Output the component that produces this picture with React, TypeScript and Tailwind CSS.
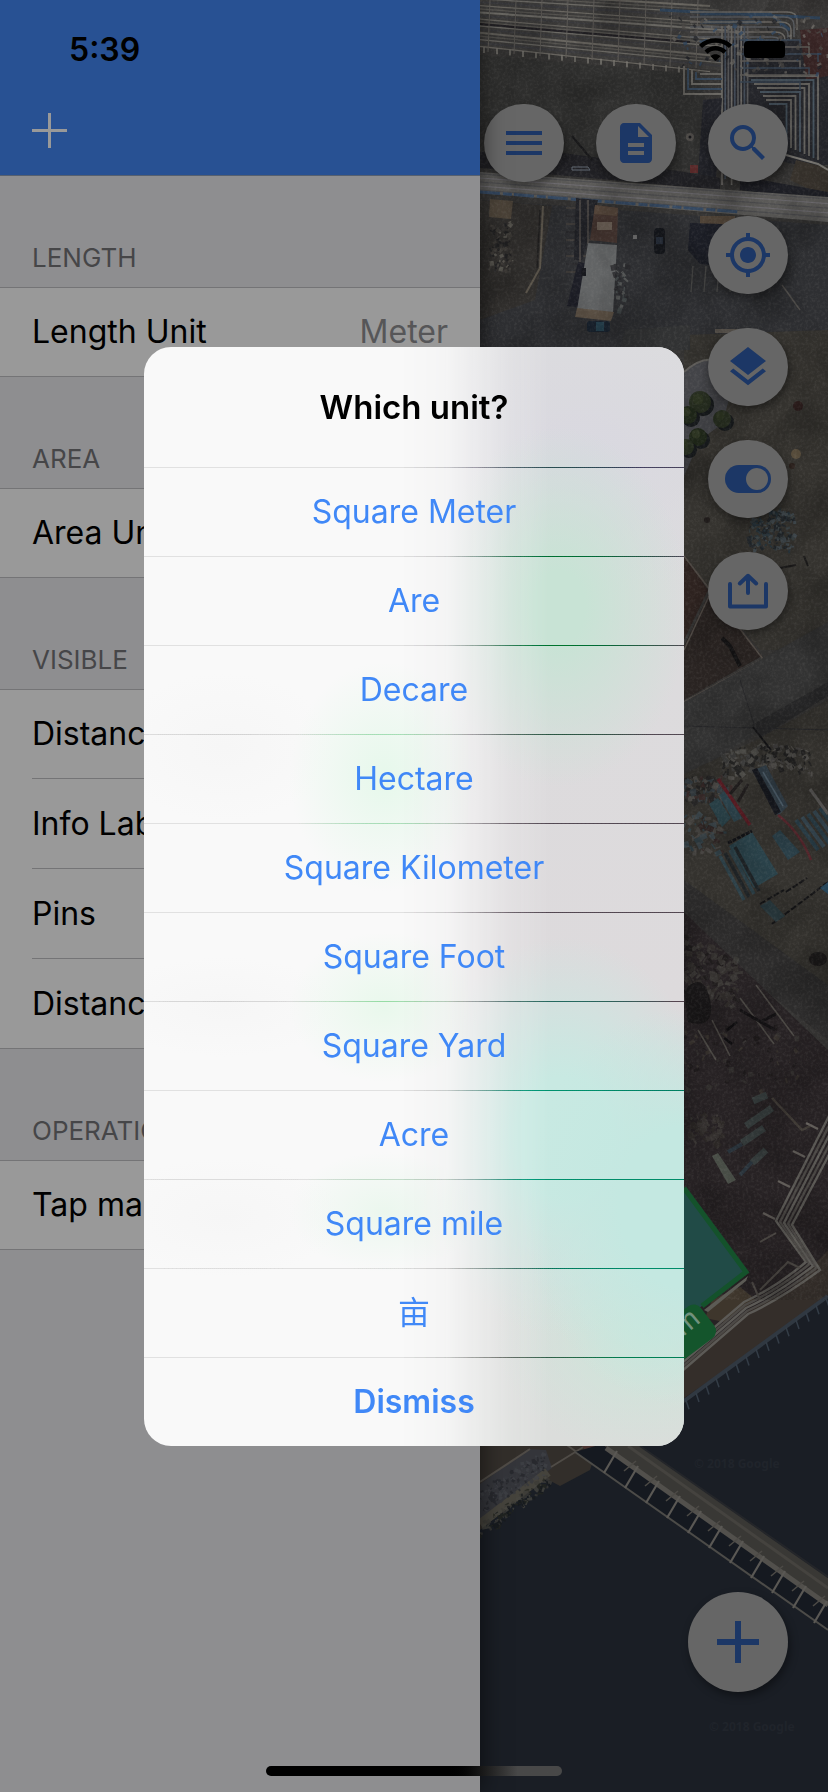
import React from "react";
import {
  MdDescription,
  MdLayers,
  MdMenu,
  MdMyLocation,
  MdSearch,
} from "react-icons/md";

const UNITS = [
  "Square Meter",
  "Are",
  "Decare",
  "Hectare",
  "Square Kilometer",
  "Square Foot",
  "Square Yard",
  "Acre",
  "Square mile",
  "亩",
];

function seeded(seed: number) {
  let s = seed;
  return () => {
    s = (s * 16807) % 2147483647;
    return s / 2147483647;
  };
}

type Box = [number, number, number, number];

function Debris({
  seed,
  count,
  box,
  colors,
  size,
  tilt = 0,
}: {
  seed: number;
  count: number;
  box: Box;
  colors: string[];
  size: number;
  tilt?: number;
}) {
  const r = seeded(seed);
  const [x0, y0, x1, y1] = box;
  return (
    <g opacity="0.75">
      {Array.from({ length: count }, (_, i) => {
        const x = x0 + r() * (x1 - x0);
        const y = y0 + r() * (y1 - y0) + (x - x0) * tilt;
        const w = 1 + r() * size;
        const h = 1 + r() * size;
        const fill = colors[Math.floor(r() * colors.length)];
        const angle = Math.floor(r() * 90);
        return (
          <rect key={i} x={x} y={y} width={w} height={h} fill={fill} transform={`rotate(${angle} ${x} ${y})`} />
        );
      })}
    </g>
  );
}

function range(n: number) {
  return Array.from({ length: n }, (_, i) => i);
}

function SatelliteMap() {
  return (
    <svg
      className="absolute inset-0 h-full w-full"
      viewBox="480 0 348 1792"
      preserveAspectRatio="xMinYMin slice"
      aria-hidden="true"
    >
      <defs>
        <filter id="grain" x="0" y="0" width="100%" height="100%">
          <feTurbulence type="fractalNoise" baseFrequency="0.35" numOctaves="3" seed="4" />
          <feColorMatrix values="0 0 0 0 0.5  0 0 0 0 0.48  0 0 0 0 0.45  0.9 0 0 0 -0.38" />
        </filter>
        <filter id="patches" x="0" y="0" width="100%" height="100%">
          <feTurbulence type="fractalNoise" baseFrequency="0.02" numOctaves="4" seed="9" />
          <feColorMatrix values="0 0 0 0 0  0 0 0 0 0  0 0 0 0 0  1.6 0 0 0 -0.6" />
        </filter>
      </defs>

      <rect x="480" y="0" width="348" height="1792" fill="#343332" />
      <path d="M480 55 L700 75 L720 170 L480 165 Z" fill="#30302f" />
      <path d="M480 200 L828 225 L828 330 L690 350 L480 350 Z" fill="#2e2f32" />
      <path d="M480 200 L552 206 L535 300 L480 320 Z" fill="#312f2d" />
      <path d="M684 335 L828 330 L828 650 L760 650 L684 560 Z" fill="#35332f" />
      <path d="M788 0 H828 V60 L800 45 Z" fill="#393736" />

      {/* upper pipe rack */}
      <path d="M480 0 H770 L735 72 L480 48 Z" fill="#3c3b3a" />
      {range(17).map((i) => (
        <path
          key={i}
          d={`M480 ${-8 + i * 3.4} L${710 + (i % 4) * 9} ${6 + i * 4.1}`}
          stroke={["#68655f", "#55534f", "#6b6964", "#3a3a3d"][i % 4]}
          strokeWidth={i % 3 === 0 ? 2 : 1.3}
          fill="none"
        />
      ))}
      <path d="M480 24 L690 42" stroke="#222024" strokeWidth="2" />
      {range(9).map((i) => (
        <path key={i} d={`M${490 + i * 26} 0 l-2 ${52 + i * 2}`} stroke="#5d5a56" strokeWidth="1" />
      ))}
      {range(16).map((i) => (
        <path key={i} d={`M${484 + i * 13} ${47 + i * 1.3} v6`} stroke="#77746e" strokeWidth="1.4" />
      ))}
      <path d="M660 10 L820 18 M700 14 h70 l20 16 M700 22 h60" stroke="#2d4055" strokeWidth="3" fill="none" />
      {range(6).map((i) => (
        <path
          key={i}
          d={`M690 ${12 + i * 5} H${772 + (5 - i) * 3} q10 0 10 8 v${10 + i * 2}`}
          stroke={i % 2 ? "#54575b" : "#65635f"}
          strokeWidth="1.6"
          fill="none"
        />
      ))}

      {/* right pipe cluster */}
      <path d="M722 40 H828 V165 H800 L722 150 Z" fill="#26272c" />
      <path d="M800 30 L828 28 V76 L806 80 Z" fill="#3a2626" />
      {range(8).map((i) => (
        <path
          key={i}
          d={`M${748 + i * 3} ${76 + i * 4} H${818 - i * 4.5} V${160 - i * 2}`}
          stroke={i % 3 === 1 ? "#47545f" : "#676561"}
          strokeWidth="1.8"
          fill="none"
        />
      ))}
      {range(9).map((i) => (
        <path
          key={i}
          d={`M${722 + i * 3.2} 26 V${185 - (i % 3) * 6}`}
          stroke={["#696763", "#434c58", "#575758"][i % 3]}
          strokeWidth="1.7"
        />
      ))}
      {range(5).map((i) => (
        <path
          key={i}
          d={`M${684 + i * 4} ${66 + i * 2} V${94 - i * 5} H${722}`}
          stroke={i % 2 ? "#36475a" : "#696762"}
          strokeWidth="1.8"
          fill="none"
        />
      ))}
      {range(7).map((i) => (
        <path key={i} d={`M740 ${40 + i * 7} H${800 + (i % 3) * 9} v8`} stroke={i % 2 ? "#605e5a" : "#3a4755"} strokeWidth="1.5" fill="none" />
      ))}
      <Debris seed={11} count={130} box={[672, 14, 828, 72]} colors={["#6d6a65", "#1f2126", "#304863", "#4d4a47"]} size={4} />
      <path d="M703 100 L722 98 L716 178 L698 176 Z" fill="#222329" />
      <path d="M796 160 L828 168 V198 L790 180 Z" fill="#38332d" />
      <path d="M786 155 L818 164 L828 170" stroke="#7b7974" strokeWidth="2" fill="none" />
      <path d="M690 165 h8 v8 h-8 Z" fill="#5a2a2a" />

      {/* main pipeway */}
      <path d="M540 150 L600 158 L720 178 V190 L480 168 V152 Z" fill="#222226" />
      <path d="M740 176 L828 192 V202 L740 190 Z" fill="#1e1f25" />
      <path d="M480 172 L828 197 V222 L480 193 Z" fill="#5a5957" />
      {range(5).map((i) => (
        <path key={i} d={`M480 ${174 + i * 4} L828 ${199 + i * 4.6}`} stroke={i % 2 ? "#6b696d" : "#4b4b4d"} strokeWidth="1.2" />
      ))}
      <path d="M480 192 L740 212" stroke="#344861" strokeWidth="3" strokeDasharray="20 3 9 2" />
      <path d="M572 136 L592 160" stroke="#1b1b1d" strokeWidth="2" />
      <path d="M572 170 h18 l-2 -3 h-16 Z" stroke="#626a74" fill="none" />
      <circle cx="690" cy="137" r="4" fill="#4d4a47" />
      <circle cx="690" cy="137" r="1.5" fill="#17171a" />

      {/* yard below the pipeway */}
      <path d="M490 199 L513 201 L511 219 L489 217 Z" fill="#4f463b" />
      <Debris seed={5} count={60} box={[490, 220, 512, 272]} colors={["#625f58", "#1e1e20", "#45423e"]} size={4} />
      <path d="M543 206 L540 268 L526 293" stroke="#5c564c" strokeWidth="2" fill="none" />
      <path d="M540 210 L537 268" stroke="#201f1f" strokeWidth="1.5" />
      {range(9).map((i) => (
        <path key={i} d={`M566 ${208 + i * 8} H600`} stroke={i % 2 ? "#28282b" : "#44403c"} strokeWidth="1.4" />
      ))}
      <path d="M576 198 L598 200 L590 232 L582 260 L574 260 Z" fill="#212227" />
      <path d="M580 200 V262 M588 200 V244" stroke="#4d4a47" strokeWidth="1.5" />
      <path d="M595 205 L618 208 L617 243 L590 240 Z" fill="#463631" />
      <path d="M595 205 L618 208 L617 216 L594 214 Z" fill="#54453a" />
      <path d="M597 222 h15 v8 h-15 Z" fill="#6c6056" />
      <path d="M578 262 L589 264 L582 308 L567 306 Z" fill="#1d1e26" />
      <path d="M588 243 L617 245 L613 313 L577 310 Z" fill="#626465" />
      <path d="M577 308 L614 312 L611 321 L575 317 Z" fill="#5c5145" />
      <path d="M582 268 h4 v8 h-5 Z" fill="#17181d" />
      <Debris seed={8} count={34} box={[615, 262, 626, 308]} colors={["#5d5f5e", "#474e4f", "#262629"]} size={5} />
      <rect x="587" y="321" width="23" height="11" rx="3" fill="#1a2430" />
      <rect x="596" y="322" width="8" height="9" fill="#264250" />
      <rect x="654" y="228" width="11" height="26" rx="4" fill="#15171c" />
      <rect x="656" y="237" width="7" height="7" fill="#252c38" />
      <rect x="633" y="235" width="4" height="4" fill="#6c6c6c" />
      <path d="M700 216 h35 v8 h-35 Z" fill="#4f4337" />
      <path d="M690 223 L722 224 V266 L700 264 L688 250 Z" fill="#1c1e26" />
      {range(5).map((i) => (
        <path key={i} d={`M${693 + i * 13} 266 l-2 26`} stroke="#4a4a49" strokeWidth="1.3" />
      ))}
      <path d="M782 285 L800 310" stroke="#504e4b" strokeWidth="1.5" />
      <path d="M715 329 h34 v4 h-34 Z" fill="#55504a" />
      <path d="M625 330 L690 325 L690 350 H620 Z" fill="#313233" />

      {/* tree bed */}
      <path d="M684 372 Q700 358 712 360 L730 396 L722 424 L700 440 L684 476 Z" fill="#434448" />
      <path d="M684 372 Q700 358 712 360" stroke="#5e5c59" strokeWidth="2" fill="none" />
      {[
        [700, 402, 11],
        [688, 415, 9],
        [722, 419, 9],
        [698, 437, 9],
        [686, 447, 8],
      ].map(([x, y, r], i) => (
        <g key={i}>
          <circle cx={x + 3} cy={y + 3} r={r} fill="#171a1c" />
          <circle cx={x} cy={y} r={r} fill={i % 2 ? "#1f2719" : "#272e20"} />
          <circle cx={x - 2} cy={y - 3} r={r / 2} fill="#2d3522" />
        </g>
      ))}
      <circle cx="798" cy="406" r="5" fill="#2c1d1c" />
      <circle cx="796" cy="454" r="5" fill="#574c3b" />
      <circle cx="792" cy="466" r="3" fill="#2b211d" />
      <circle cx="707" cy="520" r="3" fill="#1f1b1a" />
      <Debris seed={21} count={170} box={[750, 508, 794, 550]} colors={["#1b2229", "#3c474c", "#46525a", "#22343f"]} size={4} />
      <path d="M780 568 L796 565 M804 556 l4 10" stroke="#1a1919" strokeWidth="2" />

      {/* fenced lots */}
      <path d="M684 556 L708 590 L684 640 Z" fill="#2e2320" />
      <path d="M710 592 L762 656 L684 700 V646 Z" fill="#2a2422" />
      <path d="M684 556 L763 659 L684 702 M709 596 L684 650" stroke="#504a45" strokeWidth="1.6" fill="none" />
      <path d="M722 638 l8 8 l10 20" stroke="#141314" strokeWidth="4" fill="none" />
      <path d="M684 702 L828 622 V690 L684 778 Z" fill="#333333" />
      <path d="M752 725 L828 682 V696 L760 738 Z" fill="#29292a" />
      <path d="M684 774 L760 738 L828 700 V1000 L780 950 L684 900 Z" fill="#34322e" />
      <path d="M684 726 L828 730 M740 680 L754 724" stroke="#28282a" strokeWidth="1" />

      {/* material yard */}
      <Debris seed={31} count={80} box={[722, 750, 770, 775]} colors={["#53524f", "#3e3e3e", "#1e1e1f"]} size={6} tilt={-0.2} />
      <Debris seed={32} count={80} box={[768, 740, 812, 765]} colors={["#555350", "#1b1b1c", "#454342"]} size={5} tilt={0.2} />
      <Debris seed={33} count={110} box={[684, 775, 730, 800]} colors={["#555350", "#37434b", "#242425", "#3e2c2c"]} size={6} />
      <Debris seed={36} count={70} box={[684, 810, 722, 850]} colors={["#2f434c", "#3c4a52", "#2f2323", "#4c4a48"]} size={7} />
      <path d="M709 804 L718 798 L731 818 L722 827 Z" fill="#294148" />
      <path d="M719 795 L725 791 L742 818 L734 822 Z" fill="#2c434c" />
      <path d="M754 770 L766 765 L788 806 L778 816 Z" fill="#303c45" />
      <path d="M752 770 L757 768 L781 812 L775 815 Z" fill="#15171d" />
      <path d="M763 772 L783 806" stroke="#4c5c68" strokeWidth="1.5" />
      <path d="M753 727 L771 750" stroke="#151517" strokeWidth="2" />
      <path d="M718 779 L750 825" stroke="#571c23" strokeWidth="3.5" />
      <path d="M730 794 L742 780 M738 802 L748 784" stroke="#1f1c1c" strokeWidth="3" />
      <path d="M729 846 L752 832 L778 874 L754 888 Z" fill="#2a424a" />
      <path d="M728 843 L752 831" stroke="#121317" strokeWidth="3" strokeDasharray="4 1" />
      <path d="M772 836 L780 830 L800 852 L788 860 Z" fill="#2a3f48" />
      <path d="M778 815 Q800 832 811 860" stroke="#54252b" strokeWidth="2.5" fill="none" />
      {range(5).map((i) => (
        <path key={i} d={`M${796 + i * 6} ${820 - i * 3} l22 30`} stroke={i % 2 ? "#364751" : "#293d47"} strokeWidth="4" />
      ))}
      <path d="M810 789 L828 814" stroke="#5a5856" strokeWidth="3" />
      {range(4).map((i) => (
        <path key={i} d={`M${720 + i * 5} ${856 - i * 3} l24 44`} stroke={i % 2 ? "#202528" : "#2c4048"} strokeWidth="3.5" />
      ))}
      <path d="M760 904 L784 890 M786 892 L807 878 M772 924 L828 882" stroke="#141416" strokeWidth="2" strokeDasharray="6 2" />
      <path d="M760 906 L770 900 L785 916 L776 922 Z" fill="#29393e" />
      <path d="M820 888 L828 882 V894 Z" fill="#26465a" />
      <path d="M684 880 L828 985 V1040 L740 970 L684 920 Z" fill="#2d2c2c" />
      <ellipse cx="818" cy="959" rx="9" ry="7" fill="#1d1b1b" />

      {/* industrial strip */}
      <path d="M684 912 L828 1050 V1300 L684 1400 Z" fill="#272224" />
      <Debris seed={41} count={120} box={[684, 930, 738, 980]} colors={["#3e3c38", "#33302d", "#1d1a1a", "#383532"]} size={7} tilt={0.5} />
      <Debris seed={47} count={60} box={[684, 1020, 800, 1090]} colors={["#353230", "#1b1819", "#3a352f"]} size={5} />
      <path d="M684 990 q20 -20 26 10 t-22 22 Z" fill="#191718" />
      <path d="M740 998 L774 1044 M756 985 L794 1036 M698 1030 L716 1060 M712 1020 L730 1056" stroke="#4b4844" strokeWidth="1.6" />
      <path d="M740 1010 L775 1030 M760 1022 L776 1014" stroke="#141214" strokeWidth="3" />
      <path d="M727 1030 l10 -8 M724 1038 l8 6" stroke="#0f0e10" strokeWidth="2.5" />
      <Debris seed={43} count={60} box={[690, 1112, 722, 1140]} colors={["#3b3835", "#302c29"]} size={6} />
      <path d="M753 1101 l14 -6 M746 1126 L772 1108 M742 1143 L764 1128 M752 1163 L766 1150" stroke="#353c3c" strokeWidth="7" />
      <path d="M742 1144 L728 1152 M752 1162 L740 1175" stroke="#29333b" strokeWidth="4" />
      <path d="M712 1156 L718 1153 L736 1180 L728 1184 Z" fill="#484d46" />
      <path d="M772 1098 L802 1130 l8 -4" stroke="#403b36" strokeWidth="2.5" fill="none" />

      {/* shoreline and water */}
      <path d="M684 1366 L747 1310 L790 1290 L828 1250 V1300 L684 1398 Z" fill="#342e2a" />
      <path d="M712 1300 L740 1287 L756 1300 L724 1322 L705 1318 Z" fill="#3e362c" />
      <path d="M828 1296 L684 1403 L480 1500 V1792 H828 Z" fill="#1a1e25" />
      <path d="M828 1296 L684 1401" stroke="#303841" strokeWidth="4" />
      {range(15).map((i) => (
        <path key={i} d={`M${826 - i * 10} ${1298 + i * 7.3} l3 9`} stroke="#343d47" strokeWidth="1.5" />
      ))}
      {range(5).map((i) => (
        <path
          key={i}
          d={`M${832 + i * 3} ${1110 + i * 4} L${776 + i * 4} ${1221 + i} L${806 + i * 3.5} ${1262 + i * 2} Q${775 + i} ${1288 + i * 3} ${744 + i} ${1302 + i * 3} L${682} ${1355 + i * 4}`}
          stroke={i % 2 ? "#4c4946" : "#5c5a56"}
          strokeWidth="2.4"
          fill="none"
        />
      ))}
      {[
        [806, 1123],
        [793, 1151],
        [778, 1181],
        [763, 1213],
      ].map(([x, y]) => (
        <path key={y} d={`M${x} ${y} l12 6`} stroke="#605c58" strokeWidth="2.5" />
      ))}
      <path d="M776 1233 L760 1242 M760 1290 L788 1262 l12 6 M752 1282 l8 18" stroke="#4c4844" strokeWidth="2" fill="none" />

      {/* pier */}
      <path d="M480 1440 H600 L590 1470 L560 1486 L545 1478 L480 1530 Z" fill="#322e2a" />
      <path d="M480 1484 L528 1449 L546 1450 L552 1468 L480 1522 Z" fill="#34353a" />
      <path d="M480 1482 L530 1449 M551 1467 L585 1446 M560 1440 L582 1456" stroke="#4f4b46" strokeWidth="2" />
      <path d="M480 1524 L548 1472" stroke="#45433c" strokeWidth="9" />
      <Debris seed={51} count={130} box={[480, 1522, 550, 1536]} colors={["#3c3b37", "#23251f", "#171a1c", "#474640"]} size={4} tilt={-0.72} />
      <Debris seed={52} count={200} box={[480, 1488, 545, 1512]} colors={["#3f4146", "#24262b", "#36383d"]} size={3} tilt={-0.6} />
      <path d="M582 1446 H610 L592 1460 Z" fill="#4a3330" />
      <path d="M575 1452 L828 1631 V1608 L602 1444 Z" fill="#151920" />
      <path d="M602 1444 L640 1446 L828 1578 V1606 Z" fill="#393835" />
      <path d="M606 1448 L828 1605" stroke="#52504c" strokeWidth="5" />
      <path d="M628 1446 L828 1588" stroke="#45433f" strokeWidth="3" />
      <path d="M640 1446 L828 1577" stroke="#24262a" strokeWidth="2" />
      <path d="M575 1452 L828 1630" stroke="#4c4b48" strokeWidth="2" />
      {range(12).map((i) => (
        <path key={i} d={`M${604 + i * 21} ${1473 + i * 15} l13 -22`} stroke="#5a5854" strokeWidth="2.2" />
      ))}
      {range(11).map((i) => (
        <path key={i} d={`M${624 + i * 21} ${1471 + i * 15} l12 -10`} stroke="#4c4a46" strokeWidth="1.6" />
      ))}
      {["translate(694 1468)", "translate(709 1731)"].map((t) => (
        <text key={t} transform={t} fill="#20242b" fontSize="12" fontWeight="700" fontFamily="'Noto Sans', sans-serif">
          © 2018 Google
        </text>
      ))}

      <rect x="480" y="0" width="348" height="1300" filter="url(#grain)" opacity="0.25" />
      <rect x="480" y="0" width="348" height="1300" filter="url(#patches)" opacity="0.3" />

      {/* measured area */}
      <path d="M640 1130 L684 1188 L746 1272 L702 1306 L640 1350 Z" fill="#214b47" />
      <path d="M684 1188 L746 1272 L702 1306" stroke="#14522b" strokeWidth="5" fill="none" />
      <path d="M704 1310 L748 1276 L746 1281 L708 1312 Z" fill="#5c5b55" />
      <rect x="630" y="1302" width="78" height="40" rx="9" fill="#14552c" transform="rotate(-37 700 1320)" />
      <text fill="#71917d" fontSize="28" fontFamily="Inter, sans-serif" transform="translate(683 1337) rotate(-40)">
        m
      </text>
    </svg>
  );
}

function ToggleIcon() {
  return (
    <svg width="46" height="28" viewBox="0 0 46 28" aria-hidden="true">
      <rect width="46" height="28" rx="14" fill="currentColor" />
      <circle cx="32" cy="14" r="11" fill="#666666" />
    </svg>
  );
}

function ExportIcon() {
  return (
    <svg width="40" height="36" viewBox="0 0 40 36" fill="none" stroke="currentColor" strokeWidth="4" aria-hidden="true">
      <path d="M2 11V33.5H38V11" strokeLinecap="round" strokeLinejoin="round" />
      <path d="M20 3V20M11.800 10.500L20 2.800L28.200 10.500" strokeLinecap="round" strokeLinejoin="round" />
    </svg>
  );
}

function MapButton({ label, children }: { label: string; children: React.ReactNode }) {
  return (
    <button
      type="button"
      aria-label={label}
      className="flex h-[78px] w-20 items-center justify-center rounded-full bg-[#666666] text-[#1c3766] shadow-[2px_4px_8px_rgba(0,0,0,0.4)]"
    >
      {children}
    </button>
  );
}

function Section({ title, children }: { title: string; children: React.ReactNode }) {
  return (
    <section>
      <h2 className="flex h-[111px] items-end px-8 pb-[13px] text-[26px] leading-8 text-[#464648]">{title}</h2>
      <div className="border-y border-[#747476] bg-[#999999]">{children}</div>
    </section>
  );
}

function Row({ label, value }: { label: string; value?: string }) {
  return (
    <button type="button" className="flex h-[88px] w-full items-center justify-between px-8 text-left">
      <span>{label}</span>
      {value && <span className="text-[#565658]">{value}</span>}
    </button>
  );
}

function VisibilityRow({ label }: { label: string }) {
  return (
    <li className="ml-8 h-[90px] border-t border-[#747476] first:h-[88px] first:border-t-0">
      <button type="button" className="flex h-full w-full items-center text-left">
        {label}
      </button>
    </li>
  );
}

function Sidebar() {
  return (
    <aside className="relative z-10 w-[480px] shrink-0 bg-[#8e8e90] text-[32px] leading-10 text-black shadow-[0_0_24px_rgba(0,0,0,0.6)]">
      <header className="flex h-44 flex-col border-b border-[#56606f] bg-[#285193]">
        <time className="px-[69px] pt-[30px] font-semibold">5:39</time>
        <button type="button" aria-label="Add" className="mt-[43px] ml-8 size-[35px] text-[#999999]">
          <svg width="35" height="35" viewBox="0 0 35 35" aria-hidden="true">
            <path d="M16 0h3v16h16v3H19v16h-3V19H0v-3h16z" fill="currentColor" />
          </svg>
        </button>
      </header>
      <Section title="LENGTH">
        <Row label="Length Unit" value="Meter" />
      </Section>
      <Section title="AREA">
        <Row label="Area Unit" />
      </Section>
      <Section title="VISIBLE">
        <ul>
          <VisibilityRow label="Distance" />
          <VisibilityRow label="Info Label" />
          <VisibilityRow label="Pins" />
          <VisibilityRow label="Distance" />
        </ul>
      </Section>
      <Section title="OPERATION">
        <Row label="Tap map" />
      </Section>
    </aside>
  );
}

function MapPane() {
  return (
    <main className="relative flex min-w-0 flex-1 flex-col bg-[#1a1e25]">
      <SatelliteMap />
      <div className="relative flex h-[104px] justify-end gap-3 pt-[38px] pr-[43px]">
        <svg width="33" height="23" viewBox="0 0 33 23" fill="none" stroke="#000" aria-hidden="true">
          <path d="M1.500 8.500C9.500 0.500 23.500 0.500 31.500 8.500" strokeWidth="4.500" />
          <path d="M7 14.200C12.500 9 20.500 9 26 14.200" strokeWidth="4.500" />
          <path d="M11.500 18.200L16.500 23L21.500 18.200C18.500 15.600 14.500 15.600 11.500 18.200Z" fill="#000" stroke="none" />
        </svg>
        <svg className="mt-[3px]" width="41" height="17" viewBox="0 0 41 17" aria-hidden="true">
          <rect width="41" height="17" rx="4" fill="#000" />
        </svg>
      </div>
      <div className="relative flex justify-end gap-8 pr-10">
        <MapButton label="Menu">
          <MdMenu size={48} />
        </MapButton>
        <MapButton label="Documents">
          <MdDescription size={48} />
        </MapButton>
        <MapButton label="Search">
          <MdSearch size={48} />
        </MapButton>
      </div>
      <div className="relative mt-[34px] flex flex-col items-end gap-[34px] pr-10">
        <MapButton label="My location">
          <MdMyLocation size={48} />
        </MapButton>
        <MapButton label="Layers">
          <MdLayers size={48} />
        </MapButton>
        <MapButton label="Toggle">
          <ToggleIcon />
        </MapButton>
        <MapButton label="Export">
          <ExportIcon />
        </MapButton>
      </div>
      <div className="relative mt-auto flex justify-end pr-10 pb-[100px]">
        <button
          type="button"
          aria-label="Add measurement"
          className="flex size-[100px] items-center justify-center rounded-full bg-[#666666] text-[#1c3766] shadow-[2px_4px_8px_rgba(0,0,0,0.4)]"
        >
          <svg width="42" height="42" viewBox="0 0 42 42" aria-hidden="true">
            <path d="M18 0h6v18h18v6H24v18h-6V24H0v-6h18z" fill="currentColor" />
          </svg>
        </button>
      </div>
    </main>
  );
}

function Divider() {
  return <hr className="h-px border-0 bg-[#333333] mix-blend-color-burn" />;
}

function UnitDialog() {
  return (
    <div
      role="dialog"
      aria-modal="true"
      aria-labelledby="unit-title"
      className="relative isolate w-[540px] max-w-full overflow-hidden rounded-[27px] bg-[#f9f9f9] text-center text-[32px] leading-10 text-[#4088f7]"
    >
      <div
        aria-hidden="true"
        className="absolute inset-0 bg-[radial-gradient(ellipse_95px_115px_at_240px_430px,#e6f8eb,transparent),radial-gradient(ellipse_95px_75px_at_240px_660px,#e9f8ec,transparent),radial-gradient(ellipse_95px_60px_at_240px_865px,#ebf7ee,transparent),radial-gradient(ellipse_110px_75px_at_80px_400px,#f6f6f6,transparent),radial-gradient(ellipse_120px_50px_at_80px_660px,#f6f6f6,transparent),radial-gradient(ellipse_120px_60px_at_80px_870px,#f6f6f6,transparent)]"
      />
      <div
        aria-hidden="true"
        className="absolute inset-0 bg-[radial-gradient(ellipse_130px_180px_at_415px_260px,#c8e3d5_20%,transparent),radial-gradient(ellipse_160px_200px_at_540px_860px,#c4e8e1_40%,transparent),radial-gradient(ellipse_150px_200px_at_420px_790px,#c8e9e2_30%,transparent),radial-gradient(ellipse_150px_120px_at_500px_990px,#cce6da,transparent),radial-gradient(ellipse_200px_140px_at_440px_110px,#d9d8e0,transparent),linear-gradient(#dcdcde,#dddadc_60%,#dbdddb)] [mask-image:linear-gradient(to_right,transparent_255px,rgba(0,0,0,0.12)_300px,rgba(0,0,0,0.8)_365px,black_405px)]"
      />
      <h1 id="unit-title" className="relative flex h-[120px] items-center justify-center text-[33px] font-semibold text-black">
        Which unit?
      </h1>
      {UNITS.map((unit) => (
        <React.Fragment key={unit}>
          <Divider />
          <button type="button" className="relative block h-[88px] w-full">
            {unit}
          </button>
        </React.Fragment>
      ))}
      <Divider />
      <button type="button" className="relative block h-[88px] w-full font-semibold">
        Dismiss
      </button>
    </div>
  );
}

export default function App() {
  return (
    <div className="relative flex min-h-screen overflow-hidden bg-[#8e8e90] font-['Inter','Noto_Sans_CJK_SC',sans-serif]">
      <Sidebar />
      <MapPane />
      <div className="absolute inset-0 z-20 flex items-center justify-center">
        <UnitDialog />
      </div>
      <div className="absolute inset-x-0 bottom-4 z-20 flex justify-center">
        <div className="h-[10px] w-[296px] rounded-full bg-linear-to-r from-black from-60% to-[#484848] to-85%" />
      </div>
    </div>
  );
}
